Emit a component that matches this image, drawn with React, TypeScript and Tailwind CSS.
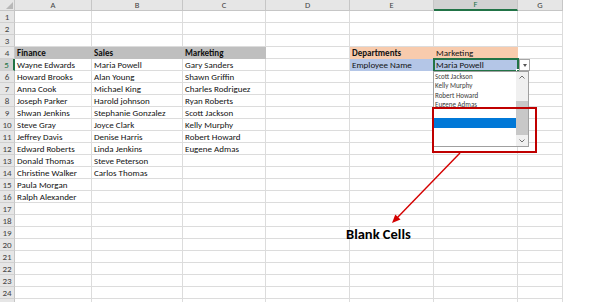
import React from "react";

const COLS = ["A", "B", "C", "D", "E", "F", "G"];

// widths of the row-number gutter and columns A..G
const widthClass = [
  "w-[15px]",
  "w-[77px]",
  "w-[91px]",
  "w-[83px]",
  "w-[84px]",
  "w-[84px]",
  "w-[84px]",
  "w-[45px]",
];

type CellStyle = "plain" | "head" | "dept" | "dept-bold" | "emp";

const finance = [
  "Wayne Edwards",
  "Howard Brooks",
  "Anna Cook",
  "Joseph Parker",
  "Shwan Jenkins",
  "Steve Gray",
  "Jeffrey Davis",
  "Edward Roberts",
  "Donald Thomas",
  "Christine Walker",
  "Paula Morgan",
  "Ralph Alexander",
];

const sales = [
  "Maria Powell",
  "Alan Young",
  "Michael King",
  "Harold johnson",
  "Stephanie Gonzalez",
  "Joyce Clark",
  "Denise Harris",
  "Linda Jenkins",
  "Steve Peterson",
  "Carlos Thomas",
];

const marketing = [
  "Gary Sanders",
  "Shawn Griffin",
  "Charles Rodriguez",
  "Ryan Roberts",
  "Scott Jackson",
  "Kelly Murphy",
  "Robert Howard",
  "Eugene Admas",
];

const listItems = ["Scott Jackson", "Kelly Murphy", "Robert Howard", "Eugene Admas", "", "", "", ""];

function cellAt(row: number, col: number): { text: string; style: CellStyle } {
  if (row === 4) {
    if (col === 0) return { text: "Finance", style: "head" };
    if (col === 1) return { text: "Sales", style: "head" };
    if (col === 2) return { text: "Marketing", style: "head" };
    if (col === 4) return { text: "Departments", style: "dept-bold" };
    if (col === 5) return { text: "Marketing", style: "dept" };
  }
  if (row === 5) {
    if (col === 4) return { text: "Employee Name", style: "emp" };
    if (col === 5) return { text: "Maria Powell", style: "emp" };
  }
  const i = row - 5;
  if (i >= 0) {
    if (col === 0 && finance[i]) return { text: finance[i], style: "plain" };
    if (col === 1 && sales[i]) return { text: sales[i], style: "plain" };
    if (col === 2 && marketing[i]) return { text: marketing[i], style: "plain" };
  }
  return { text: "", style: "plain" };
}

const styleClass: Record<CellStyle, string> = {
  plain: "border-[#dcdcdc]",
  head: "bg-[#bfbfbf] border-[#bfbfbf] font-bold",
  dept: "bg-[#f8cbad] border-[#f8cbad]",
  "dept-bold": "bg-[#f8cbad] border-[#f8cbad] font-bold",
  emp: "bg-[#b4c6e7] border-[#b4c6e7]",
};

function HeaderRow() {
  return (
    <div className="flex h-[11px]">
      <div className="relative w-[15px] shrink-0 bg-[#e6e6e6] border-r border-b border-[#c6c6c6]">
        <div className="absolute right-[1px] bottom-[1px] w-0 h-0 border-l-[7px] border-l-transparent border-b-[7px] border-b-[#b8b8b8]" />
      </div>
      {COLS.map((c, i) =>
        c === "F" ? (
          <div
            key={c}
            className={`${widthClass[i + 1]} shrink-0 flex items-center justify-center bg-[#d2d2d2] border-r border-[#c6c6c6] border-b-2 border-b-[#217346] text-[8.5px] leading-none text-[#217346]`}
          >
            {c}
          </div>
        ) : (
          <div
            key={c}
            className={`${widthClass[i + 1]} shrink-0 flex items-center justify-center bg-[#e6e6e6] border-r border-b border-[#c6c6c6] text-[8.5px] leading-none text-[#444]`}
          >
            {c}
          </div>
        )
      )}
    </div>
  );
}

function SheetRow({ row, label = true }: { row: number; label?: boolean }) {
  const selected = row === 5;
  return (
    <div className="flex h-[12px]">
      <div
        className={
          selected
            ? "w-[15px] shrink-0 flex items-center justify-center bg-[#d2d2d2] border-b border-[#d0d0d0] border-r-2 border-r-[#217346] text-[9px] leading-none text-[#217346]"
            : "w-[15px] shrink-0 flex items-center justify-center bg-[#e6e6e6] border-b border-[#d0d0d0] border-r border-r-[#c6c6c6] text-[9px] leading-none text-[#444]"
        }
      >
        {label ? row : null}
      </div>
      {COLS.map((c, i) => {
        const cell = cellAt(row, i);
        return (
          <div
            key={c}
            className={`${widthClass[i + 1]} shrink-0 border-r border-b ${styleClass[cell.style]} pl-[2px] flex items-end pb-[1px] text-[9px] leading-none text-[#111] whitespace-nowrap overflow-visible`}
          >
            {cell.text}
          </div>
        );
      })}
    </div>
  );
}

function Chevron({ up }: { up?: boolean }) {
  return (
    <svg width="6" height="4" viewBox="0 0 6 4">
      <polyline
        points={up ? "0.5,3.5 3,1 5.5,3.5" : "0.5,0.5 3,3 5.5,0.5"}
        fill="none"
        stroke="#606060"
        strokeWidth="0.9"
      />
    </svg>
  );
}

function DropdownList() {
  return (
    <div className="absolute left-[433px] top-[71px] w-[96px] h-[76px] bg-white border border-[#a0a0a0] flex">
      <div className="flex-1 flex flex-col">
        {listItems.map((name, i) => (
          <div
            key={i}
            className={`h-[9.25px] pl-[1px] flex items-center text-[7px] leading-none text-[#3a3a3a] ${
              i === 5 ? "bg-[#0078d7]" : ""
            }`}
          >
            {name}
          </div>
        ))}
      </div>
      <div className="w-[12px] bg-[#f0f0f0] flex flex-col">
        <div className="h-[10px] flex items-center justify-center">
          <Chevron up />
        </div>
        <div className="flex-1 pt-[19px]">
          <div className="h-[34px] bg-[#c8c8c8]" />
        </div>
        <div className="h-[10px] flex items-center justify-center">
          <Chevron />
        </div>
      </div>
    </div>
  );
}

export default function App() {
  const rows = Array.from({ length: 24 }, (_, i) => i + 1);
  return (
    <div
      className="relative w-[602px] h-[302px] overflow-hidden bg-white"
      style={{ fontFamily: '"Carlito", "Lato", "Liberation Sans", sans-serif' }}
    >
      <HeaderRow />
      {rows.map((r) => (
        <SheetRow key={r} row={r} />
      ))}
      {/* row 25 only peeks in at the bottom edge */}
      <SheetRow row={25} label={false} />

      {/* active cell F5 with its validation drop button */}
      <div className="absolute left-[433px] top-[58px] w-[86px] h-[14px] border-2 border-[#217346]" />
      <div className="absolute left-[516px] top-[69px] w-[4px] h-[4px] bg-[#217346] border border-white" />
      <div className="absolute left-[519px] top-[59px] w-[11px] h-[12px] bg-white border border-[#a6a6a6] flex items-center justify-center">
        <div className="w-0 h-0 border-l-[2.5px] border-r-[2.5px] border-t-[3px] border-l-transparent border-r-transparent border-t-[#555]" />
      </div>

      <DropdownList />

      {/* callout */}
      <div className="absolute left-[432px] top-[107px] w-[105px] h-[46px] border-2 border-[#c00000]" />
      <svg className="absolute left-0 top-0" width="602" height="302" viewBox="0 0 602 302">
        <line x1="460" y1="153" x2="396" y2="219" stroke="#d40000" strokeWidth="1.4" />
        <polygon points="392,223 400.5,219.5 395.3,214.5" fill="#d40000" />
      </svg>
      <div className="absolute left-[346px] top-[227px] text-[14.5px] leading-none font-bold text-black">
        Blank Cells
      </div>
    </div>
  );
}
